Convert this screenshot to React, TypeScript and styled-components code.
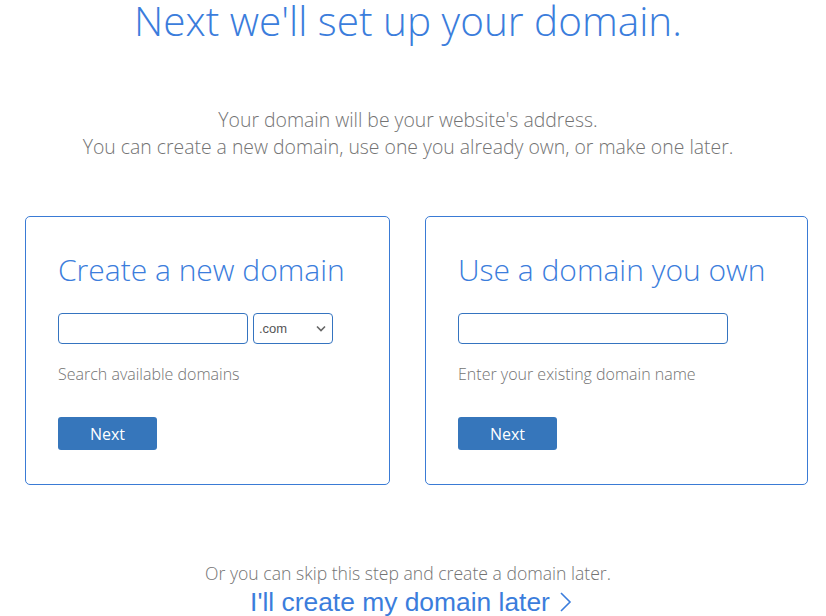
import React from 'react'
import styled, { createGlobalStyle } from 'styled-components'

const GlobalStyle = createGlobalStyle`
  html, body {
    margin: 0;
    padding: 0;
    background: #ffffff;
    font-family: 'Open Sans', 'Noto Sans', sans-serif;
  }
`

const Page = styled.div`
  width: 816px;
  display: flex;
  flex-direction: column;
  align-items: center;
`

const Title = styled.h1`
  margin: 0;
  font-size: 40.5px;
  font-weight: 300;
  line-height: 42.5px;
  color: #3b7ddc;
`

const Lead = styled.p`
  margin: 63.5px 0 0;
  font-size: 19.4px;
  font-weight: 300;
  line-height: 27px;
  color: #737373;
  text-align: center;
`

const CardRow = styled.div`
  align-self: stretch;
  display: flex;
  gap: 35px;
  margin-top: 56px;
  padding-left: 25px;
`

const Card = styled.section<{ $width: number }>`
  box-sizing: border-box;
  width: ${(p) => p.$width}px;
  height: 269px;
  padding: 32px 32px;
  border: 1px solid #3a7bd5;
  border-radius: 5px;
`

const CardTitle = styled.h2`
  margin: 0;
  font-size: 30px;
  font-weight: 300;
  line-height: 41px;
  color: #3b7ddc;
`

const FieldRow = styled.div`
  display: flex;
  gap: 5px;
  margin-top: 23px;
`

const TextInput = styled.input<{ $width: number }>`
  box-sizing: border-box;
  width: ${(p) => p.$width}px;
  height: 31px;
  padding: 0 8px;
  border: 1px solid #3574c0;
  border-radius: 4px;
  font: 14px 'Liberation Sans', Arial, sans-serif;
  outline: none;
`

const SelectWrap = styled.div`
  position: relative;
  width: 80px;
  height: 31px;
`

const Select = styled.select`
  box-sizing: border-box;
  width: 100%;
  height: 100%;
  padding: 0 0 0 5px;
  border: 1px solid #3574c0;
  border-radius: 4px;
  background: #fff;
  font: 13px 'Liberation Sans', Arial, sans-serif;
  color: #555;
  appearance: none;
  -webkit-appearance: none;
  outline: none;
`

const Caret = styled.svg`
  position: absolute;
  right: 7px;
  top: 12px;
  pointer-events: none;
`

const Help = styled.p`
  margin: 19px 0 0;
  font-size: 16px;
  font-weight: 300;
  line-height: 22px;
  color: #737373;
`

const NextButton = styled.button`
  display: block;
  margin-top: 32px;
  width: 99px;
  height: 33px;
  border: none;
  border-radius: 3px;
  background: #3676bb;
  color: #fff;
  font-family: 'Open Sans', sans-serif;
  font-size: 16px;
  font-weight: 400;
  cursor: pointer;
`

const SkipNote = styled.p`
  margin: 75px 0 0;
  font-size: 17.6px;
  font-weight: 300;
  line-height: 27px;
  color: #737373;
  text-align: center;
`

const LaterLink = styled.a`
  display: flex;
  align-items: center;
  gap: 9px;
  margin-left: 6px;
  font-family: 'Liberation Sans', Arial, sans-serif;
  font-size: 26.4px;
  line-height: 30px;
  color: #3b7ddc;
  text-decoration: none;
`

const App: React.FC = () => {
  return (
    <>
      <GlobalStyle />
      <Page>
        <Title>Next we'll set up your domain.</Title>
        <Lead>
          Your domain will be your website's address.
          <br />
          You can create a new domain, use one you already own, or make one later.
        </Lead>

        <CardRow>
          {/* new domain */}
          <Card $width={365}>
            <CardTitle>Create a new domain</CardTitle>
            <FieldRow>
              <TextInput $width={190} type="text" />
              <SelectWrap>
                <Select defaultValue=".com">
                  <option>.com</option>
                  <option>.net</option>
                  <option>.org</option>
                </Select>
                <Caret width="10" height="7" viewBox="0 0 10 7">
                  <path d="M1 1.5 L5 5.5 L9 1.5" fill="none" stroke="#666" strokeWidth="1.6" />
                </Caret>
              </SelectWrap>
            </FieldRow>
            <Help>Search available domains</Help>
            <NextButton>Next</NextButton>
          </Card>

          {/* existing domain */}
          <Card $width={383}>
            <CardTitle>Use a domain you own</CardTitle>
            <FieldRow>
              <TextInput $width={270} type="text" />
            </FieldRow>
            <Help>Enter your existing domain name</Help>
            <NextButton>Next</NextButton>
          </Card>
        </CardRow>

        <SkipNote>Or you can skip this step and create a domain later.</SkipNote>
        <LaterLink href="#">
          I'll create my domain later
          <svg width="13" height="22" viewBox="0 0 13 22">
            <path d="M2 2 L11 11 L2 20" fill="none" stroke="#3b7ddc" strokeWidth="1.6" />
          </svg>
        </LaterLink>
      </Page>
    </>
  )
}

export default App
